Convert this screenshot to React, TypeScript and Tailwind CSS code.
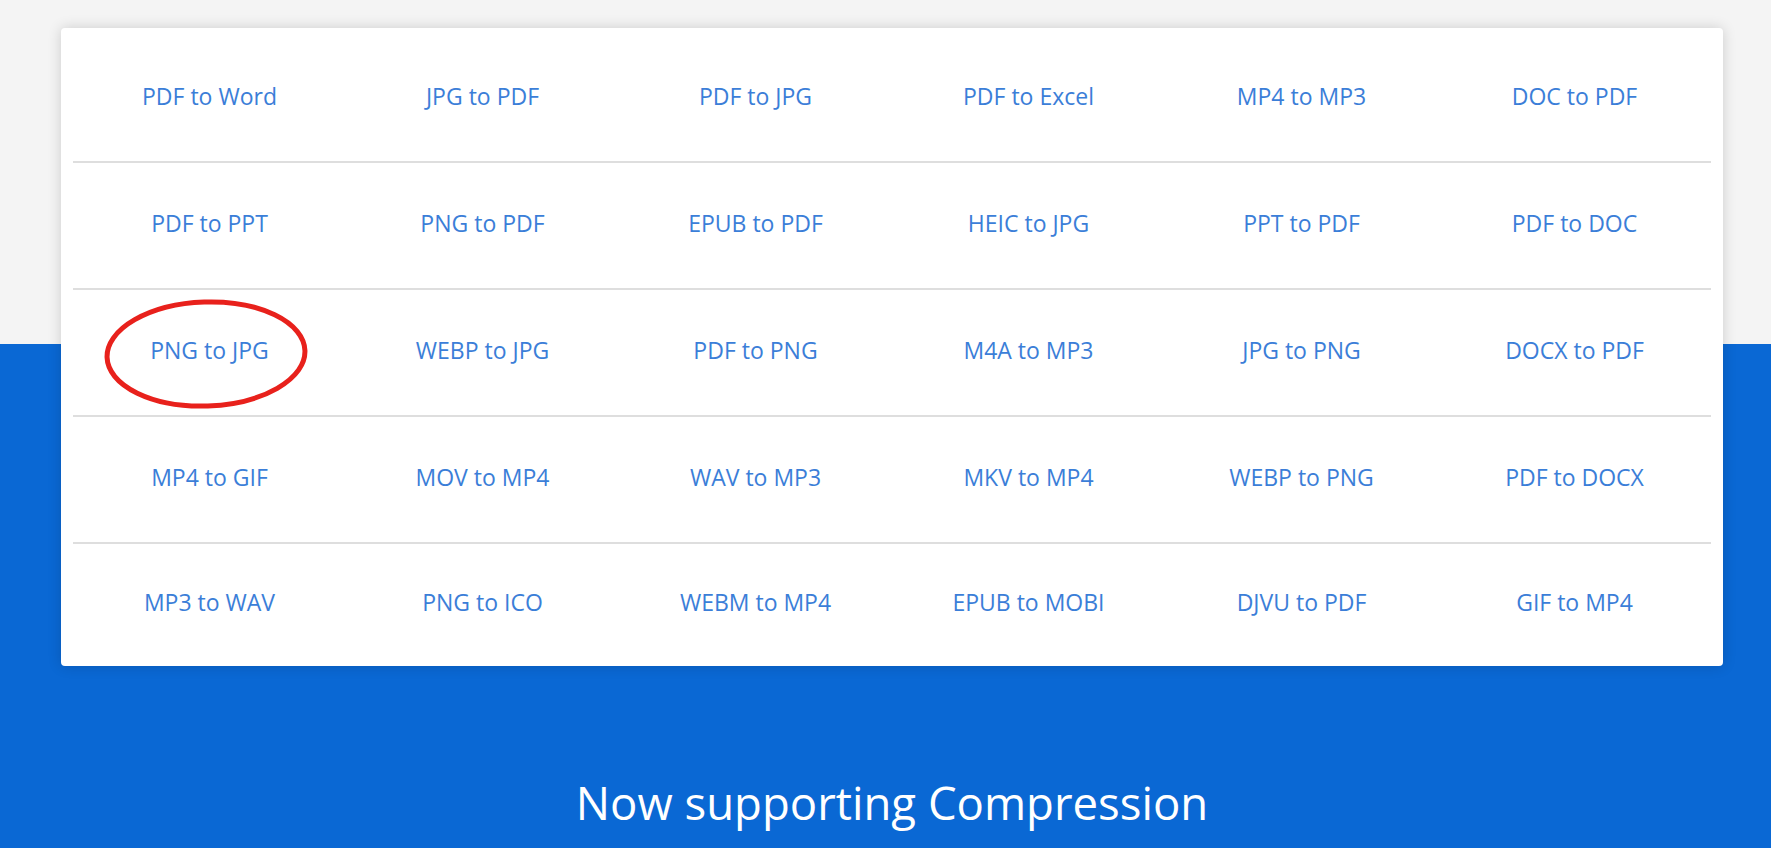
const rows = [
  ['PDF to Word', 'JPG to PDF', 'PDF to JPG', 'PDF to Excel', 'MP4 to MP3', 'DOC to PDF'],
  ['PDF to PPT', 'PNG to PDF', 'EPUB to PDF', 'HEIC to JPG', 'PPT to PDF', 'PDF to DOC'],
  ['PNG to JPG', 'WEBP to JPG', 'PDF to PNG', 'M4A to MP3', 'JPG to PNG', 'DOCX to PDF'],
  ['MP4 to GIF', 'MOV to MP4', 'WAV to MP3', 'MKV to MP4', 'WEBP to PNG', 'PDF to DOCX'],
  ['MP3 to WAV', 'PNG to ICO', 'WEBM to MP4', 'EPUB to MOBI', 'DJVU to PDF', 'GIF to MP4'],
];

export default function App() {
  return (
    <div
      className="min-h-screen w-full overflow-hidden bg-[linear-gradient(to_bottom,#f4f4f4_344px,#0a68d4_344px)]"
      style={{ fontFamily: '"Open Sans", "Noto Sans", sans-serif' }}
    >
      <div className="ml-[61px] w-[1662px] pt-[28px]">
        {/* Converter grid card */}
        <div className="relative rounded-[4px] bg-white px-[12px] pt-[8px] shadow-[0_0_14px_rgba(0,0,0,0.16)]">
          {rows.map((row, ri) => (
            <div
              key={ri}
              className={
                ri < rows.length - 1
                  ? 'grid h-[127px] grid-cols-6 border-b-2 border-[#dedede] pb-[5px]'
                  : 'grid h-[122px] grid-cols-6 pb-[5px]'
              }
            >
              {row.map((label) => (
                <a
                  key={label}
                  href="#"
                  className="flex items-center justify-center text-[23px] text-[#3b7ed8]"
                >
                  {label}
                </a>
              ))}
            </div>
          ))}

          {/* red annotation circle */}
          <svg
            className="pointer-events-none absolute left-[42px] top-[269px]"
            width="206"
            height="114"
            viewBox="0 0 206 114"
          >
            <ellipse cx="103" cy="57" rx="99" ry="52" fill="none" stroke="#e8211c" strokeWidth="5" transform="rotate(-2 103 57)" />
          </svg>
        </div>

        <h2 className="mt-[109px] text-center text-[45.5px] leading-[55px] text-white">
          Now supporting Compression
        </h2>
      </div>
    </div>
  );
}
